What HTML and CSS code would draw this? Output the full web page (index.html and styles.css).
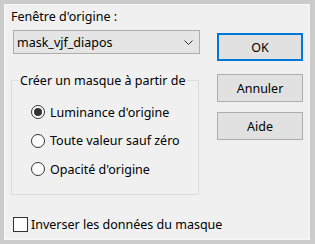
FILE: index.html
```html
<!DOCTYPE html>
<html lang="fr">
<head>
<meta charset="utf-8">
<link rel="stylesheet" href="styles.css">
</head>
<body>
<div class="frame">
  <div class="panel">
    <div class="left">
      <div class="label">Fenêtre d'origine :</div>
      <div class="select">
        <span class="select-text">mask_vjf_diapos</span>
        <svg class="chevron" width="9" height="5" viewBox="0 0 9 5"><path d="M0.5 0.5 L4.5 4.5 L8.5 0.5" fill="none" stroke="#333" stroke-width="1"/></svg>
      </div>
      <fieldset class="group">
        <legend class="legend">Créer un masque à partir de</legend>
        <div class="radio-row"><span class="radio checked"></span><span class="opt">Luminance d'origine</span></div>
        <div class="radio-row"><span class="radio"></span><span class="opt">Toute valeur sauf zéro</span></div>
        <div class="radio-row"><span class="radio"></span><span class="opt">Opacité d'origine</span></div>
      </fieldset>
      <div class="check-row"><span class="checkbox"></span><span class="opt">Inverser les données du masque</span></div>
    </div>
    <div class="right">
      <div class="btn btn-default">OK</div>
      <div class="btn btn-annuler">Annuler</div>
      <div class="btn btn-aide">Aide</div>
    </div>
  </div>
</div>
</body>
</html>
```
FILE: styles.css
```css
* { box-sizing: border-box; }
html, body { margin: 0; padding: 0; }
body {
  width: 315px;
  height: 244px;
  background: #cbcbcb;
  font-family: "Noto Sans", "Open Sans", sans-serif;
  font-size: 12.5px;
  color: #000;
  overflow: hidden;
  white-space: nowrap;
}
.frame {
  padding: 4px 5px 4px 4px;
  height: 244px;
}
.panel {
  height: 236px;
  background: #f0f0f0;
  border: 1px solid #f7f7f7;
  display: grid;
  grid-template-columns: 189px 86px;
  column-gap: 17px;
  padding: 2px 0 0 6px;
}
.left {
  display: flex;
  flex-direction: column;
  min-width: 0;
}
.label {
  line-height: 16px;
  margin-top: 2px;
}
.select {
  margin-top: 5px;
  margin-left: 2px;
  width: 187px;
  height: 24px;
  background: #e5e5e5;
  border: 1px solid #adadad;
  display: flex;
  align-items: center;
  justify-content: space-between;
  padding: 0 6px 0 3px;
}
.chevron { display: block; }
.group {
  margin: 19px 0 0 0;
  width: 188px;
  height: 122px;
  min-width: 0;
  border: 1px solid #dcdcdc;
  padding: 10px 0 0 6px;
}
.legend {
  padding: 0 2px;
  line-height: 15px;
  white-space: nowrap;
}
.radio-row {
  display: flex;
  align-items: center;
  height: 28.5px;
  gap: 5px;
  margin-left: 13px;
}
.radio {
  width: 14px;
  height: 14px;
  border: 1px solid #333;
  border-radius: 50%;
  background: #fff;
  display: flex;
  align-items: center;
  justify-content: center;
  flex: none;
}
.radio.checked::after {
  content: "";
  width: 8px;
  height: 8px;
  border-radius: 50%;
  background: #333;
}
.opt { line-height: 15px; }
.check-row {
  margin-top: 22px;
  margin-left: 2px;
  display: flex;
  align-items: center;
  gap: 3px;
}
.checkbox {
  width: 15px;
  height: 15px;
  border: 1px solid #333;
  background: #fff;
  flex: none;
}
.right {
  display: flex;
  flex-direction: column;
  padding-top: 26px;
}
.btn {
  height: 28px;
  background: #e1e1e1;
  border: 1px solid #adadad;
  display: flex;
  align-items: center;
  justify-content: center;
  line-height: 15px;
}
.btn-default { border: 2px solid #0078d7; }
.btn-annuler { margin-top: 13px; }
.btn-aide { margin-top: 10px; }
```
